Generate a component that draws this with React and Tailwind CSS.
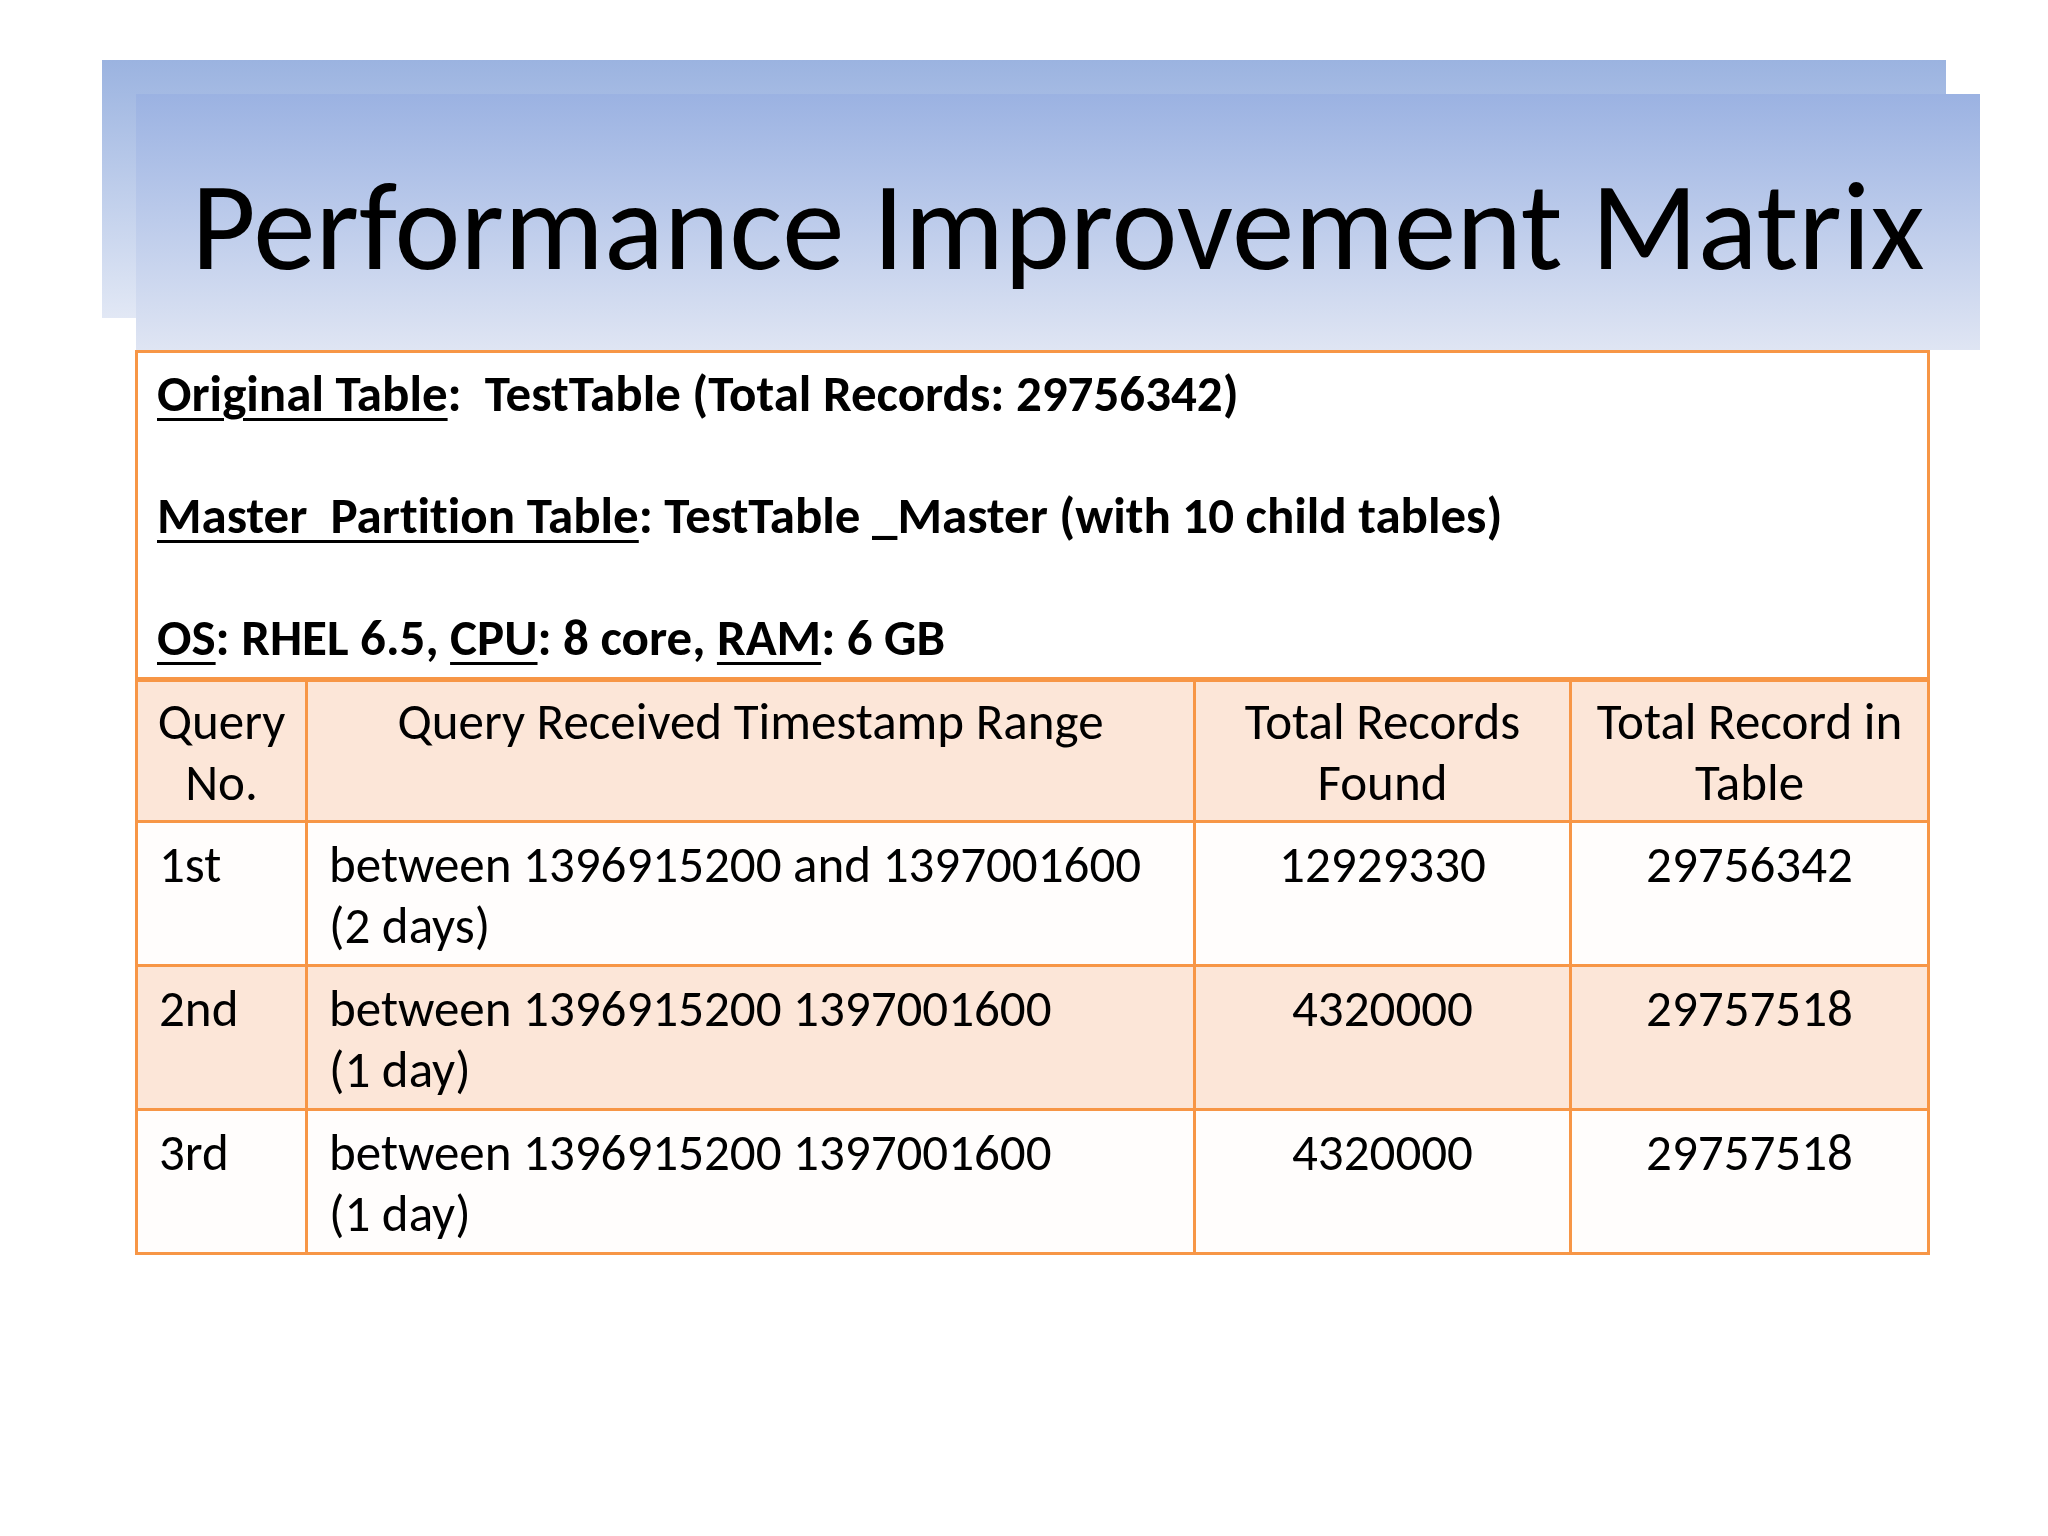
import React from "react";

const rows = [
  {
    no: "1st",
    range: ["between 1396915200 and 1397001600", "(2 days)"],
    found: "12929330",
    total: "29756342",
    shaded: false,
  },
  {
    no: "2nd",
    range: ["between 1396915200 1397001600", "(1 day)"],
    found: "4320000",
    total: "29757518",
    shaded: true,
  },
  {
    no: "3rd",
    range: ["between 1396915200 1397001600", "(1 day)"],
    found: "4320000",
    total: "29757518",
    shaded: false,
  },
];

function Label({ children }) {
  return (
    <span className="underline decoration-[3px] underline-offset-[7px]">
      {children}
    </span>
  );
}

export default function App() {
  return (
    <div
      className="w-[2048px] h-[1536px] bg-white text-black pt-[60px] overflow-hidden [font-feature-settings:'liga'_0,'clig'_0] [font-variant-ligatures:no-common-ligatures]"
      style={{ fontFamily: "Carlito, Lato, 'Open Sans', sans-serif" }}
    >
      {/* title banner: shadow plate + front plate */}
      <div className="ml-[102px] w-[1844px] h-[258px] bg-gradient-to-b from-[#9bb3e0] to-[#e2e8f5]" />
      <div className="relative -mt-[224px] ml-[136px] w-[1844px] h-[256px] bg-gradient-to-b from-[#9bb2e2] to-[#dfe5f3] pt-[70px]">
        <h1 className="text-center text-[125px] leading-none font-normal">
          Performance Improvement Matrix
        </h1>
      </div>

      {/* matrix table */}
      <div className="relative ml-[135px] w-[1795px] border-[3px] border-[#f79646] bg-white text-[51px]">
        <div className="h-[324px] pt-[10px] px-[19px] font-bold leading-[61px] flex flex-col gap-[61px] whitespace-pre">
          <p>
            <Label>Original Table</Label>:  TestTable (Total Records: 29756342)
          </p>
          <p>
            <Label>Master  Partition Table</Label>: TestTable _Master (with 10 child tables)
          </p>
          <p>
            <Label>OS</Label>: RHEL 6.5, <Label>CPU</Label>: 8 core, <Label>RAM</Label>: 6 GB
          </p>
        </div>

        <div className="flex h-[143px] border-t-[5px] border-[#f79646] bg-[#fce6d8] leading-[61px]">
          <div className="w-[167px] pt-[9px] text-center">
            Query
            <br />
            No.
          </div>
          <div className="w-[888px] pt-[9px] border-l-[3px] border-[#f79646] text-center">
            Query Received Timestamp Range
          </div>
          <div className="w-[376px] pt-[9px] border-l-[3px] border-[#f79646] text-center">
            Total Records
            <br />
            Found
          </div>
          <div className="flex-1 pt-[9px] border-l-[3px] border-[#f79646] text-center">
            Total Record in
            <br />
            Table
          </div>
        </div>

        {rows.map((r) => (
          <div
            key={r.no}
            className={`flex h-[144px] border-t-[3px] border-[#f79646] leading-[61px] ${
              r.shaded ? "bg-[#fce6d8]" : "bg-[#fffdfc]"
            }`}
          >
            <div className="w-[167px] pt-[11px] px-[21px]">{r.no}</div>
            <div className="w-[888px] pt-[11px] px-[21px] border-l-[3px] border-[#f79646]">
              {r.range[0]}
              <br />
              {r.range[1]}
            </div>
            <div className="w-[376px] pt-[11px] border-l-[3px] border-[#f79646] text-center">
              {r.found}
            </div>
            <div className="flex-1 pt-[11px] border-l-[3px] border-[#f79646] text-center">
              {r.total}
            </div>
          </div>
        ))}
      </div>
    </div>
  );
}
